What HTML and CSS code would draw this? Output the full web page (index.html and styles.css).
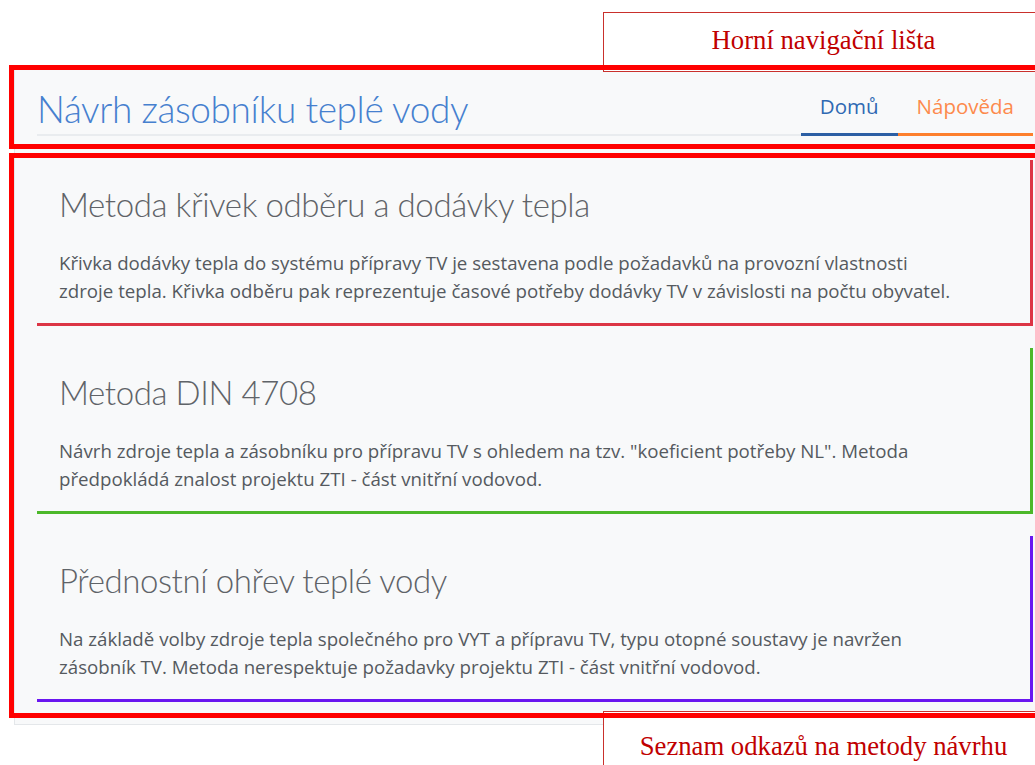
FILE: index.html
```html
<!DOCTYPE html>
<html lang="cs">
<head>
<meta charset="utf-8">
<title>Návrh zásobníku teplé vody</title>
<link rel="stylesheet" href="styles.css">
</head>
<body>
<div class="app">
  <header class="topbar">
    <div class="topbar-inner">
      <h1 class="brand">Návrh zásobníku teplé vody</h1>
      <nav class="nav">
        <a class="nav-link nav-home" href="#">Domů</a>
        <a class="nav-link nav-help" href="#">Nápověda</a>
      </nav>
    </div>
  </header>
  <main class="methods">
    <a class="method method-red" href="#">
      <h2 class="method-title">Metoda křivek odběru a dodávky tepla</h2>
      <p class="method-text">Křivka dodávky tepla do systému přípravy TV je sestavena podle požadavků na provozní vlastnosti zdroje tepla. Křivka odběru pak reprezentuje časové potřeby dodávky TV v závislosti na počtu obyvatel.</p>
    </a>
    <a class="method method-green" href="#">
      <h2 class="method-title">Metoda DIN 4708</h2>
      <p class="method-text">Návrh zdroje tepla a zásobníku pro přípravu TV s ohledem na tzv. "koeficient potřeby NL". Metoda předpokládá znalost projektu ZTI - část vnitřní vodovod.</p>
    </a>
    <a class="method method-purple" href="#">
      <h2 class="method-title">Přednostní ohřev teplé vody</h2>
      <p class="method-text">Na základě volby zdroje tepla společného pro VYT a přípravu TV, typu otopné soustavy je navržen zásobník TV. Metoda nerespektuje požadavky projektu ZTI - část vnitřní vodovod.</p>
    </a>
  </main>
</div>

<div class="callout callout-top">Horní navigační lišta</div>
<div class="callout callout-bottom">Seznam odkazů na metody návrhu</div>
<div class="frame frame-top"></div>
<div class="frame frame-bottom"></div>
</body>
</html>
```

FILE: styles.css
```css
html, body {
  margin: 0;
  padding: 0;
  background: #ffffff;
  overflow: hidden;
}

body {
  position: relative;
  width: 1035px;
  height: 765px;
  font-family: "Open Sans", "Noto Sans", sans-serif;
}

/* application shell */
.app {
  margin: 68px 0 0 14px;
  width: 1040px;
  background: #f8f9fa;
  border-left: 1px solid #e4e7ea;
  border-bottom: 1px solid #e4e7ea;
}

.topbar {
  padding: 18px 22px 0;
}

.topbar-inner {
  display: flex;
  align-items: flex-end;
  justify-content: space-between;
  border-bottom: 2px solid #e9ecef;
}

.brand {
  margin: 0 0 2px;
  font-family: "Lato", "Open Sans", sans-serif;
  font-size: 37px;
  line-height: 46px;
  letter-spacing: -0.4px;
  font-weight: 300;
  color: #4680cf;
}

.nav {
  display: flex;
}

.nav-link {
  display: block;
  padding: 0 19px 11px;
  margin-bottom: -2px;
  font-size: 20.5px;
  line-height: 1.5;
  text-decoration: none;
  border-bottom: 3px solid transparent;
}

.nav-home {
  color: #2f69b3;
  border-bottom-color: #2c5fa4;
}

.nav-help {
  color: #fd8a4c;
  border-bottom-color: #fd7f2c;
}

/* list of design methods */
.methods {
  display: flex;
  flex-direction: column;
  gap: 22px;
  padding: 24px 22px 22px;
}

.method {
  display: block;
  padding: 23px 22px 19px;
  text-decoration: none;
  border-right: 3px solid;
  border-bottom: 3px solid;
}

.method-red { border-color: #dc3545; }
.method-green { border-color: #4cb82a; }
.method-purple { border-color: #6a16f0; }

.method-title {
  margin: 0;
  font-family: "Lato", "Open Sans", sans-serif;
  font-size: 33px;
  line-height: 43px;
  letter-spacing: -0.4px;
  font-weight: 300;
  color: #5f6368;
}

.method-text {
  margin: 23px 0 0;
  max-width: 900px;
  font-size: 18.7px;
  line-height: 27.5px;
  color: #555a5f;
}

/* annotation overlays */
.callout {
  position: absolute;
  left: 603px;
  width: 441px;
  height: 60px;
  box-sizing: border-box;
  background: #ffffff;
  border: 1.5px solid #c9302c;
  font-family: "Liberation Serif", "Times New Roman", serif;
  font-size: 26.7px;
  color: #c00000;
  text-align: center;
}

.callout-top {
  top: 12px;
  line-height: 54px;
}

.callout-bottom {
  top: 711px;
  line-height: 68px;
}

.frame {
  position: absolute;
  left: 9px;
  width: 1040px;
  box-sizing: border-box;
  border: 5px solid #ff0000;
}

.frame-top {
  top: 65px;
  height: 84px;
}

.frame-bottom {
  top: 153px;
  height: 565px;
}
```
